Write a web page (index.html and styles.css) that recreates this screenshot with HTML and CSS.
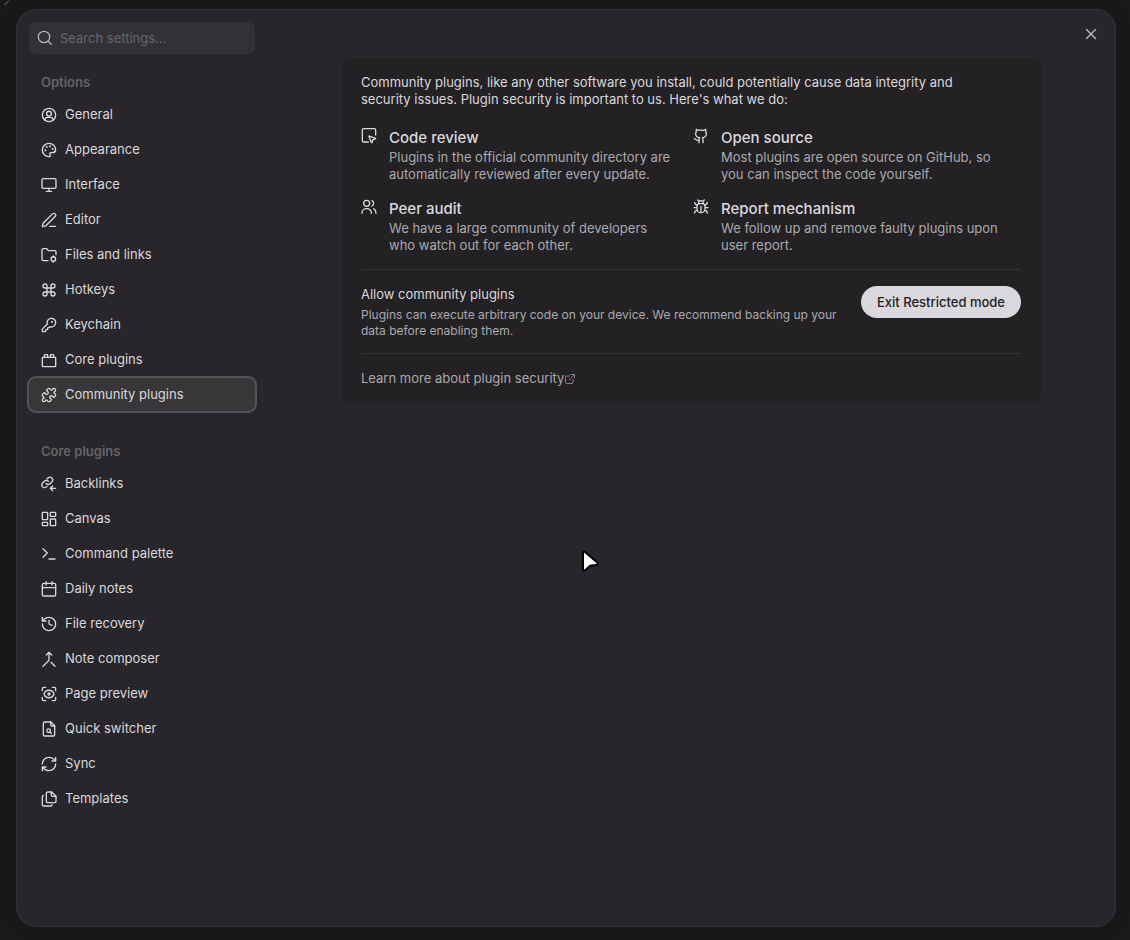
FILE: index.html
```html
<!DOCTYPE html>
<html lang="en">
<head>
<meta charset="utf-8">
<title>Settings</title>
<link rel="stylesheet" href="styles.css">
</head>
<body>
<svg class="corner-mark" viewBox="0 0 6 6"><path d="M0.5 5 5 0.5"/></svg>
<div class="modal" role="dialog" aria-label="Settings">
  <nav class="sidebar" aria-label="Settings sections">
    <label class="search">
      <svg class="icon" viewBox="0 0 24 24"><circle cx="10.500" cy="10.500" r="8.500"/><path d="m21.500 21.500-4.700-4.700"/></svg>
      <input class="search-input" type="text" placeholder="Search settings..." aria-label="Search settings">
    </label>

    <section class="group">
      <h2 class="group-title">Options</h2>
      <div class="group-items">
        <button class="item" type="button"><svg class="icon" viewBox="0 0 24 24"><circle cx="12" cy="12" r="10"/><circle cx="12" cy="10" r="3.6"/><path d="M6 20v-1a3.5 3.5 0 0 1 3.5-3.5h5A3.5 3.5 0 0 1 18 19v1"/></svg>General</button>
        <button class="item" type="button"><svg class="icon" viewBox="0 0 24 24"><path d="M12 22a10 10 0 1 1 10-10 5 5 0 0 1-5 4h-2.2a1.8 1.8 0 0 0-1.4 2.8l.3.4A1.8 1.8 0 0 1 12 22z"/><circle cx="13.5" cy="6.5" r=".6"/><circle cx="17.5" cy="10.5" r=".6"/><circle cx="6.5" cy="12.5" r=".6"/><circle cx="8.5" cy="7.5" r=".6"/></svg>Appearance</button>
        <button class="item" type="button"><svg class="icon" viewBox="0 0 24 24"><rect x="1.5" y="2.5" width="21" height="14.5" rx="2"/><path d="M8 21.5h8M12 17v4.5"/></svg>Interface</button>
        <button class="item" type="button"><svg class="icon" viewBox="0 0 24 24"><path d="M13 21.5h9M21.2 6.8a1 1 0 0 0-4-4L3.8 16.200a2 2 0 0 0-.5.8L2 21.400a.5.5 0 0 0 .6.6l4.400-1.300a2 2 0 0 0 .8-.5z"/></svg>Editor</button>
        <button class="item" type="button"><svg class="icon" viewBox="0 0 24 24"><path d="M10.500 20.500H3.500a2 2 0 0 1-2-2V4.500a2 2 0 0 1 2-2h4.400a2 2 0 0 1 1.700.9l.8 1.200a2 2 0 0 0 1.700.9h8.400a2 2 0 0 1 2 2V11.500"/><circle cx="18.500" cy="18" r="3.400"/><path d="M18.500 13.200v1.400M18.500 21.400v1.400"/></svg>Files and links</button>
        <button class="item" type="button"><svg class="icon" viewBox="0 0 24 24"><path d="M15 6v12a3 3 0 1 0 3-3H6a3 3 0 1 0 3 3V6a3 3 0 1 0-3 3h12a3 3 0 1 0-3-3"/></svg>Hotkeys</button>
        <button class="item" type="button"><svg class="icon" viewBox="0 0 24 24"><path d="M2.586 17.414A2 2 0 0 0 2 18.828V21a1 1 0 0 0 1 1h3a1 1 0 0 0 1-1v-1a1 1 0 0 1 1-1h1a1 1 0 0 0 1-1v-1a1 1 0 0 1 1-1h.172a2 2 0 0 0 1.414-.586l.814-.814a6.500 6.500 0 1 0-4-4z"/><circle cx="16.500" cy="7.500" r=".6"/></svg>Keychain</button>
        <button class="item" type="button"><svg class="icon" viewBox="0 0 24 24"><rect x="2" y="8" width="20" height="14" rx="1"/><path d="M10 8V5a1 1 0 0 0-1-1H6a1 1 0 0 0-1 1v3M19 8V5a1 1 0 0 0-1-1h-3a1 1 0 0 0-1 1v3"/></svg>Core plugins</button>
        <button class="item item-active" type="button" aria-current="page"><svg class="icon" viewBox="0 0 24 24"><path d="M19.439 7.850c-.049.322.059.648.289.878l1.568 1.568c.470.470.706 1.087.706 1.704s-.235 1.233-.706 1.704l-1.611 1.611a.980.980 0 0 1-.837.276c-.470-.070-.802-.480-.968-.925a2.501 2.501 0 1 0-3.214 3.214c.446.166.855.497.925.968a.979.979 0 0 1-.276.837l-1.610 1.610a2.404 2.404 0 0 1-1.705.707 2.402 2.402 0 0 1-1.704-.706l-1.568-1.568a1.026 1.026 0 0 0-.877-.290c-.493.074-.840.504-1.020.968a2.500 2.500 0 1 1-3.237-3.237c.464-.180.894-.527.967-1.020a1.026 1.026 0 0 0-.289-.877l-1.568-1.568A2.402 2.402 0 0 1 1.998 12c0-.617.236-1.234.706-1.704L4.230 8.770a.980.980 0 0 1 .837-.276c.470.070.802.480.968.925a2.501 2.501 0 1 0 3.214-3.214c-.446-.166-.855-.497-.925-.968a.979.979 0 0 1 .276-.837l1.610-1.610a2.404 2.404 0 0 1 1.705-.707c.617 0 1.234.236 1.704.706l1.568 1.568c.230.230.556.338.877.290.493-.074.840-.504 1.020-.969a2.500 2.500 0 1 1 3.237 3.237c-.464.180-.894.527-.967 1.020Z"/></svg>Community plugins</button>
      </div>
    </section>

    <section class="group">
      <h2 class="group-title">Core plugins</h2>
      <div class="group-items">
        <button class="item" type="button"><svg class="icon" viewBox="0 0 24 24"><path d="M7.500 11.200a4 4 0 0 0 6 .4l2.700-2.700a4.100 4.100 0 0 0-5.800-5.800L8.900 4.600"/><path d="M11 8.200a4 4 0 0 0-6-.4l-2.700 2.700a4.100 4.100 0 0 0 5.800 5.800l1-1"/><path d="M22 18.500h-7.500M17.500 15l-3.500 3.500 3.500 3.500"/></svg>Backlinks</button>
        <button class="item" type="button"><svg class="icon" viewBox="0 0 24 24"><rect x="2" y="2" width="8" height="11" rx="1"/><rect x="14" y="2" width="8" height="6" rx="1"/><rect x="14" y="12" width="8" height="10" rx="1"/><rect x="2" y="17" width="8" height="5" rx="1"/></svg>Canvas</button>
        <button class="item" type="button"><svg class="icon" viewBox="0 0 24 24"><path d="m3 17 6.500-6.500L3 4M12 19.500h9"/></svg>Command palette</button>
        <button class="item" type="button"><svg class="icon" viewBox="0 0 24 24"><path d="M7.500 1v5M16.500 1v5M2 10h20"/><rect x="2" y="3.500" width="20" height="19" rx="2"/></svg>Daily notes</button>
        <button class="item" type="button"><svg class="icon" viewBox="0 0 24 24"><path d="M2 12a10 10 0 1 0 10-10 10.800 10.800 0 0 0-7.500 3L2 7.500M2 2v5.500h5.500M12 6.500V12l4.500 2.200"/></svg>File recovery</button>
        <button class="item" type="button"><svg class="icon" viewBox="0 0 24 24"><path d="m8 6 4-4 4 4M12 2v10.300a4 4 0 0 1-1.172 2.872L3 23M21 23l-6-6"/></svg>Note composer</button>
        <button class="item" type="button"><svg class="icon" viewBox="0 0 24 24"><path d="M2 7V4a2 2 0 0 1 2-2h3M17 2h3a2 2 0 0 1 2 2v3M22 17v3a2 2 0 0 1-2 2h-3M7 22H4a2 2 0 0 1-2-2v-3"/><circle cx="12" cy="12" r="1.500"/><path d="M19.500 12.400a1 1 0 0 0 0-.8 8 8 0 0 0-15 0 1 1 0 0 0 0 .8 8 8 0 0 0 15 0"/></svg>Page preview</button>
        <button class="item" type="button"><svg class="icon" viewBox="0 0 24 24"><path d="M15 1.500H5.500a2 2 0 0 0-2 2v17a2 2 0 0 0 2 2h13a2 2 0 0 0 2-2V7z"/><path d="M14.500 1.500V5.500a2 2 0 0 0 2 2h4"/><circle cx="11.500" cy="14.500" r="2.700"/><path d="m13.500 16.500 2 2"/></svg>Quick switcher</button>
        <button class="item" type="button"><svg class="icon" viewBox="0 0 24 24"><path d="M2 12a10 10 0 0 1 10-10 10.800 10.800 0 0 1 7.500 3L22 7.500M22 2v5.500h-5.500M22 12a10 10 0 0 1-10 10 10.800 10.800 0 0 1-7.500-3L2 16.500M7.500 16.500H2V22"/></svg>Sync</button>
        <button class="item" type="button"><svg class="icon" viewBox="0 0 24 24"><path d="M16 1.500h-6a2 2 0 0 0-2 2v12a2 2 0 0 0 2 2h10.500a2 2 0 0 0 2-2V8z"/><path d="M15.500 1.500V6a2 2 0 0 0 2 2h5M4 6.500a2 2 0 0 0-2 2v12a2 2 0 0 0 2 2h10.500a2 2 0 0 0 2-2"/></svg>Templates</button>
      </div>
    </section>
  </nav>

  <main class="content">
    <div class="card">
      <p class="intro">Community plugins, like any other software you install, could potentially cause data integrity and security issues. Plugin security is important to us. Here's what we do:</p>
      <div class="features">
        <div class="feature">
          <svg class="icon" viewBox="0 0 24 24"><path d="M12.034 12.681a.498.498 0 0 1 .647-.647l9 3.500a.5.5 0 0 1-.033.943l-3.444 1.068a1 1 0 0 0-.660.660l-1.067 3.443a.5.5 0 0 1-.943.033z"/><path d="M22 10.500V3a2 2 0 0 0-2-2H4a2 2 0 0 0-2 2v16a2 2 0 0 0 2 2h7"/></svg>
          <div class="feature-body">
            <h3 class="feature-title">Code review</h3>
            <p class="feature-text">Plugins in the official community directory are automatically reviewed after every update.</p>
          </div>
        </div>
        <div class="feature">
          <svg class="icon" viewBox="0 0 24 24"><path d="M15 22v-4a4.800 4.800 0 0 0-1-3.500c3 0 6-2 6-5.500.080-1.250-.270-2.480-1-3.500.280-1.150.280-2.350 0-3.500 0 0-1 0-3 1.500-2.640-.5-5.360-.5-8 0C6 2 5 2 5 2c-.3 1.150-.3 2.350 0 3.500A5.403 5.403 0 0 0 4 9c0 3.500 3 5.500 6 5.500-.390.490-.680 1.050-.850 1.650-.170.600-.220 1.230-.150 1.850v4"/><path d="M9 18c-4.510 2-5-2-7-2"/></svg>
          <div class="feature-body">
            <h3 class="feature-title">Open source</h3>
            <p class="feature-text">Most plugins are open source on GitHub, so you can inspect the code yourself.</p>
          </div>
        </div>
        <div class="feature">
          <svg class="icon" viewBox="0 0 24 24"><circle cx="8.500" cy="6.500" r="4.500"/><path d="M1.500 21.500v-1a7 6 0 0 1 14 0v1M16.500 2.500a4.500 4.500 0 0 1 0 8M19 14.500c2.200 1.300 3.500 3.500 3.500 7"/></svg>
          <div class="feature-body">
            <h3 class="feature-title">Peer audit</h3>
            <p class="feature-text">We have a large community of developers who watch out for each other.</p>
          </div>
        </div>
        <div class="feature">
          <svg class="icon" viewBox="0 0 24 24"><path d="m7 1.500 2 2M15 3.500l2-2M8.500 7V6a3.500 3.500 0 1 1 7 0v1M12 20.500c-3.300 0-6-2.700-6-6v-3.500a4 4 0 0 1 4-4h4a4 4 0 0 1 4 4v3.500c0 3.300-2.700 6-6 6M12 20V11M6 9C4 8.800 2.500 7.100 2.500 5M6 13H1.500M2.500 21c0-2.100 1.700-3.900 3.800-4M21.500 5c0 2.100-1.600 3.800-3.500 4M22.500 13H18M17.700 17c2.100.1 3.800 1.900 3.800 4"/></svg>
          <div class="feature-body">
            <h3 class="feature-title">Report mechanism</h3>
            <p class="feature-text">We follow up and remove faulty plugins upon user report.</p>
          </div>
        </div>
      </div>
      <div class="setting">
        <div class="setting-info">
          <div class="setting-name">Allow community plugins</div>
          <p class="setting-text">Plugins can execute arbitrary code on your device. We recommend backing up your data before enabling them.</p>
        </div>
        <button class="cta" type="button">Exit Restricted mode</button>
      </div>
      <div class="more">
        <a class="more-link" href="#plugin-security">Learn more about plugin security<svg class="icon icon-external" viewBox="0 0 24 24"><path d="M14 3h7v7M21 3 10.500 13.500M18 13v6a2 2 0 0 1-2 2H5a2 2 0 0 1-2-2V8a2 2 0 0 1 2-2h6"/></svg></a>
      </div>
    </div>
  </main>

  <button class="close" type="button" aria-label="Close"><svg class="icon icon-close" viewBox="0 0 24 24"><path d="M18 6 6 18M6 6l12 12"/></svg></button>
</div>
<svg class="pointer" viewBox="0 0 20 24"><path d="M2 2.800c0-1.200 1.200-1.600 2-.8l12 10.200c1.200 1 .7 2.500-.8 2.700l-6 .8-4.800 4.400c-1 .9-2.400.5-2.400-.9z"/></svg>
</body>
</html>
```
FILE: styles.css
```css
* {
  box-sizing: border-box;
}

body {
  margin: 0;
  min-height: 100vh;
  display: flex;
  padding: 9px 14px 13px 16px;
  background: #1a181b;
  color: #dad8dc;
  font: 13px/17px Inter, "Liberation Sans", sans-serif;
}

h2, h3, p {
  margin: 0;
}

button, input {
  font: inherit;
  color: inherit;
}

.icon {
  width: 16px;
  height: 16px;
  flex: none;
  fill: none;
  stroke: currentColor;
  stroke-width: 2;
  stroke-linecap: round;
  stroke-linejoin: round;
}

.corner-mark {
  position: absolute;
  top: 0;
  left: 4px;
  width: 6px;
  height: 6px;
  fill: none;
  stroke: #77757a;
}

.modal {
  position: relative;
  flex: 1;
  display: flex;
  border: 1px solid #363438;
  border-radius: 20px;
  background: #28262a;
  box-shadow: 0 0 16px rgba(0, 0, 0, 0.2);
}

.sidebar {
  width: 250px;
  flex: none;
  padding: 12px;
}

.search {
  display: flex;
  align-items: center;
  gap: 7px;
  height: 32px;
  padding: 0 8px;
  border-radius: 7px;
  background: #333135;
  color: #b4b2b6;
}

.search-input {
  flex: 1;
  min-width: 0;
  padding: 0;
  border: 0;
  outline: 0;
  background: none;
}

.search-input::placeholder {
  color: #69676c;
  opacity: 1;
}

.group {
  padding-top: 20px;
}

.group + .group {
  padding-top: 32px;
}

.group-title {
  padding: 0 12px;
  color: #656368;
  font-size: 13px;
  font-weight: 600;
  line-height: 17px;
}

.group-items {
  display: flex;
  flex-direction: column;
  gap: 2px;
  padding-top: 7px;
}

.item {
  display: flex;
  align-items: center;
  gap: 8px;
  height: 33px;
  padding: 0 12px;
  border: 0;
  border-radius: 7px;
  background: none;
  text-align: left;
}

.item-active {
  background: #383638;
  box-shadow: 0 0 0 2px #555357;
}

.content {
  flex: 1;
  min-width: 0;
  padding: 48px 24px;
}

.card {
  max-width: 700px;
  margin: 0 auto;
  padding: 16px 20px;
  border-radius: 8px;
  background: #232124;
}

.intro {
  padding-right: 20px;
}

.features {
  display: grid;
  grid-template-columns: 1fr 1fr;
  gap: 16px 4px;
  padding: 20px 0 15px;
}

.feature {
  display: flex;
  gap: 12px;
}

.feature-title {
  font-size: 15px;
  font-weight: 500;
  line-height: 20px;
}

.feature-text {
  padding: 1px 16px 0 0;
  color: #aba9ad;
}

.setting {
  display: flex;
  align-items: flex-start;
  gap: 16px;
  padding: 16px 0 14px;
  border-top: 1px solid #353336;
}

.setting-info {
  flex: 1;
}

.setting-text {
  padding-top: 4px;
  color: #aba9ad;
  font-size: 12px;
  line-height: 16px;
}

.cta {
  height: 32px;
  padding: 0 16px;
  border: 0;
  border-radius: 16px;
  background: #dad8dc;
  color: #232124;
  font-weight: 500;
  white-space: nowrap;
}

.more {
  padding-top: 16px;
  border-top: 1px solid #353336;
}

.more-link {
  display: inline-flex;
  align-items: center;
  color: #aba9ad;
  text-decoration: none;
}

.icon-external {
  width: 12px;
  height: 12px;
  color: #858388;
}

.close {
  position: absolute;
  top: 8px;
  right: 8px;
  width: 32px;
  height: 32px;
  display: flex;
  align-items: center;
  justify-content: center;
  padding: 0;
  border: 0;
  background: none;
  color: #b4b2b6;
}

.icon-close {
  width: 18px;
  height: 18px;
}

.pointer {
  position: absolute;
  top: 550px;
  left: 581px;
  width: 20px;
  height: 24px;
  fill: #fff;
  stroke: #000;
  stroke-width: 2;
}
```
